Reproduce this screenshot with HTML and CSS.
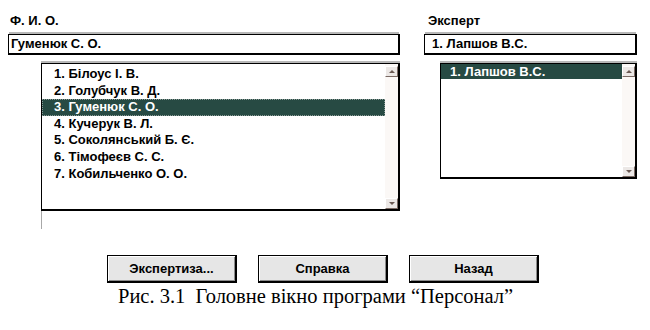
FILE: index.html
```html
<!DOCTYPE html>
<html lang="uk">
<head>
	<meta charset="UTF-8">
	<title>Персонал</title>
	<link rel="stylesheet" href="styles.css">
</head>
<body>
	<section class="window">
		<div class="fields">
			<div class="col col-left">
				<div class="label">Ф. И. О.</div>
				<div class="edit">Гуменюк С. О.</div>
				<div class="list list-left">
					<ul class="items">
						<li>1. Білоус І. В.</li>
						<li>2. Голубчук В. Д.</li>
						<li class="sel">3. Гуменюк С. О.</li>
						<li>4. Кучерук В. Л.</li>
						<li>5. Соколянський Б. Є.</li>
						<li>6. Тімофеєв С. С.</li>
						<li>7. Кобильченко О. О.</li>
					</ul>
					<div class="scroll">
						<span class="arrow up"></span>
						<span class="track"></span>
						<span class="arrow down"></span>
					</div>
				</div>
				<div class="tail"></div>
			</div>
			<div class="col col-right">
				<div class="label">Эксперт</div>
				<div class="edit">1. Лапшов В.С.</div>
				<div class="list list-right">
					<ul class="items">
						<li class="sel solid">1. Лапшов В.С.</li>
					</ul>
					<div class="scroll">
						<span class="arrow up"></span>
						<span class="track"></span>
						<span class="arrow down"></span>
					</div>
				</div>
			</div>
		</div>

		<div class="buttons">
			<button class="btn">Экспертиза...</button>
			<button class="btn">Справка</button>
			<button class="btn">Назад</button>
		</div>

		<p class="caption">Рис. 3.1&nbsp;&nbsp;Головне вікно програми “Персонал”</p>
	</section>
</body>
</html>
```

FILE: styles.css
```css
* {
	box-sizing: border-box;
}
html,
body {
	margin: 0;
	background: #fff;
	color: #000;
	font: bold 13px 'Liberation Sans', Arial, sans-serif;
}

.window {
	width: 650px;
	height: 330px;
	padding-top: 13px;
}

.fields {
	display: flex;
}

.col {
	display: flex;
	flex-direction: column;
}

.col-left {
	margin-left: 8px;
	width: 392px;
}

.col-right {
	margin-left: 16px;
	width: 221px;
	padding-left: 8px;
}

.label {
	height: 21px;
	padding-left: 2px;
	line-height: 16px;
}
.col-right .label {
	padding-left: 4px;
}

.edit {
	height: 21px;
	border: 1px solid #000;
	border-right-width: 2px;
	border-bottom-width: 2px;
	padding-left: 2px;
	line-height: 18px;
	box-shadow: 0 -3px 0 -1px #b8b8b8;
}
.col-right .edit {
	padding-left: 7px;
}

.list {
	display: flex;
	margin-top: 8px;
	border: 1px solid #000;
	border-right-width: 2px;
	border-bottom-width: 2px;
	background: #fff;
	box-shadow: 0 -2px 0 0 #b8b8b8;
}

.list-left {
	margin-left: 33px;
	width: 359px;
	height: 148px;
}

.list-right {
	margin-left: 16px;
	width: 197px;
	height: 116px;
}

.items {
	flex: 1;
	list-style: none;
	margin: 0;
	padding: 0;
}
.list-left .items {
	padding-top: 2px;
}

.items li {
	height: 16.6px;
	line-height: 16px;
	padding-left: 12px;
}

.items .sel {
	background: #274a43;
	color: #fff;
	outline: 1px dotted #8a9a96;
	outline-offset: -1px;
}
.items .solid {
	outline: none;
	padding-left: 9px;
	height: 15px;
	line-height: 15px;
}

.scroll {
	width: 13px;
	display: flex;
	flex-direction: column;
	padding-top: 2px;
	background: #fbf8f6;
}

.arrow {
	height: 11px;
	background: #ece8e6;
	border: 1px solid;
	border-color: #fff #7a6a64 #7a6a64 #fff;
	position: relative;
}
.arrow::after {
	content: '';
	position: absolute;
	left: 3px;
	width: 0;
	height: 0;
	border-left: 3px solid transparent;
	border-right: 3px solid transparent;
}
.up::after {
	top: 3px;
	border-bottom: 3px solid #6b5a54;
}
.down::after {
	top: 3px;
	border-top: 3px solid #6b5a54;
}

.track {
	flex: 1;
}

.tail {
	margin-left: 33px;
	width: 1px;
	height: 18px;
	background: #a8a8a8;
}

.buttons {
	display: flex;
	gap: 21px;
	margin-top: 26px;
	margin-left: 107px;
}

.btn {
	width: 130px;
	height: 28px;
	background: #e6e6e6;
	border: 1px solid #000;
	border-right-width: 2px;
	border-bottom-width: 2px;
	box-shadow: inset 1px 1px 0 #fff, inset -1px -1px 0 #8c8c8c;
	font: bold 13px 'Liberation Sans', Arial, sans-serif;
	color: #000;
	padding: 0;
}

.caption {
	margin: 2px 0 0 118px;
	font: 20.5px 'Liberation Serif', 'Times New Roman', serif;
}
```
